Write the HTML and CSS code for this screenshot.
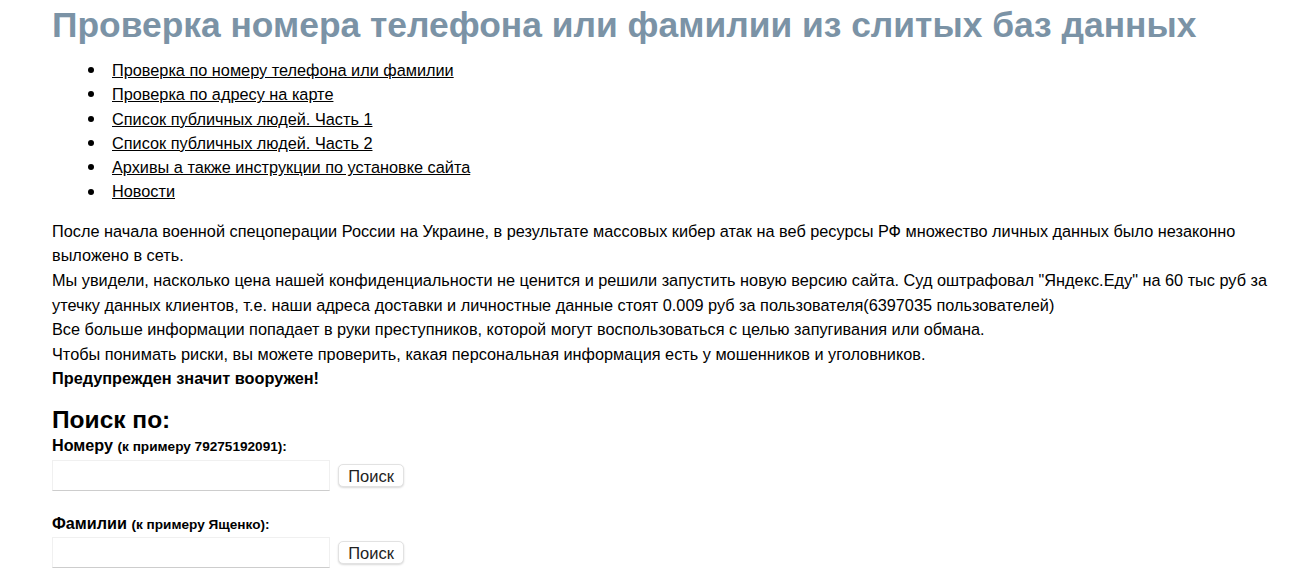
FILE: index.html
```html
<!DOCTYPE html>
<html lang="ru">
<head>
<meta charset="utf-8">
<title>Проверка номера телефона или фамилии из слитых баз данных</title>
<link rel="stylesheet" href="styles.css">
</head>
<body>
<div class="page">
  <h1 class="title">Проверка номера телефона или фамилии из слитых баз данных</h1>
  <ul class="nav">
    <li><a href="#">Проверка по номеру телефона или фамилии</a></li>
    <li><a href="#">Проверка по адресу на карте</a></li>
    <li><a href="#">Список публичных людей. Часть 1</a></li>
    <li><a href="#">Список публичных людей. Часть 2</a></li>
    <li><a href="#">Архивы а также инструкции по установке сайта</a></li>
    <li><a href="#">Новости</a></li>
  </ul>
  <p class="intro">После начала военной спецоперации России на Украине, в результате массовых кибер атак на веб ресурсы РФ множество личных данных было незаконно выложено в сеть.<br>
  Мы увидели, насколько цена нашей конфиденциальности не ценится и решили запустить новую версию сайта. Суд оштрафовал "Яндекс.Еду" на 60 тыс руб за утечку данных клиентов, т.е. наши адреса доставки и личностные данные стоят 0.009 руб за пользователя(6397035 пользователей)<br>
  Все больше информации попадает в руки преступников, которой могут воспользоваться с целью запугивания или обмана.<br>
  Чтобы понимать риски, вы можете проверить, какая персональная информация есть у мошенников и уголовников.<br>
  <b>Предупрежден значит вооружен!</b></p>
  <h2 class="search-title">Поиск по:</h2>
  <form class="search">
    <label class="field-label">Номеру <small>(к примеру 79275192091):</small></label>
    <div class="field-row">
      <input class="field-input" type="text">
      <button class="field-btn" type="button">Поиск</button>
    </div>
  </form>
  <form class="search">
    <label class="field-label">Фамилии <small>(к примеру Ященко):</small></label>
    <div class="field-row">
      <input class="field-input" type="text">
      <button class="field-btn" type="button">Поиск</button>
    </div>
  </form>
</div>
</body>
</html>
```
FILE: styles.css
```css
html, body {
  margin: 0;
  padding: 0;
  background: #fff;
}

.page {
  padding: 0 20px 0 52px;
  font-family: "Liberation Sans", Arial, sans-serif;
  color: #000;
  font-size: 16.3px;
}

.title {
  margin: 0;
  padding-top: 3px;
  font-size: 35.4px;
  line-height: 44px;
  font-weight: bold;
  color: #7b93a6;
}

/* navigation list with round markers */
.nav {
  margin: 11px 0 0;
  padding-left: 36px;
  list-style: none;
  line-height: 24.3px;
}

.nav li {
  display: flex;
  align-items: center;
}

.nav li::before {
  content: "";
  flex: none;
  width: 6px;
  height: 6px;
  border-radius: 50%;
  background: #000;
  margin-right: 18px;
}

.nav a {
  color: #000;
  text-decoration: underline;
}

.intro {
  margin: 15px 0 0;
  line-height: 24.6px;
}

.search-title {
  margin: 16px 0 0;
  font-size: 24.5px;
  line-height: 26px;
}

.search {
  margin: 0 0 22px;
}

.field-label {
  display: block;
  margin-top: 2px;
  font-weight: bold;
  font-size: 16.2px;
  line-height: 20px;
}

.field-label small {
  font-size: 13.6px;
}

.field-row {
  display: flex;
  align-items: center;
  gap: 8px;
  margin-top: 3px;
}

.search + .search .field-row {
  margin-top: 2px;
}

.field-input {
  box-sizing: border-box;
  width: 278px;
  height: 31px;
  border: 1px solid #f0f0f0;
  border-bottom: 1px solid #cdcdcd;
  padding: 0 6px;
  font: inherit;
  background: #fff;
}

.field-btn {
  margin-top: 1px;
  box-sizing: border-box;
  width: 66px;
  height: 23px;
  background: #fff;
  border: 1px solid #e2e2e2;
  border-radius: 5px;
  box-shadow: 0 1px 2px rgba(0,0,0,0.15);
  font-family: "Liberation Sans", Arial, sans-serif;
  font-size: 16.5px;
  line-height: 20px;
  color: #222;
  padding: 0;
}
```
